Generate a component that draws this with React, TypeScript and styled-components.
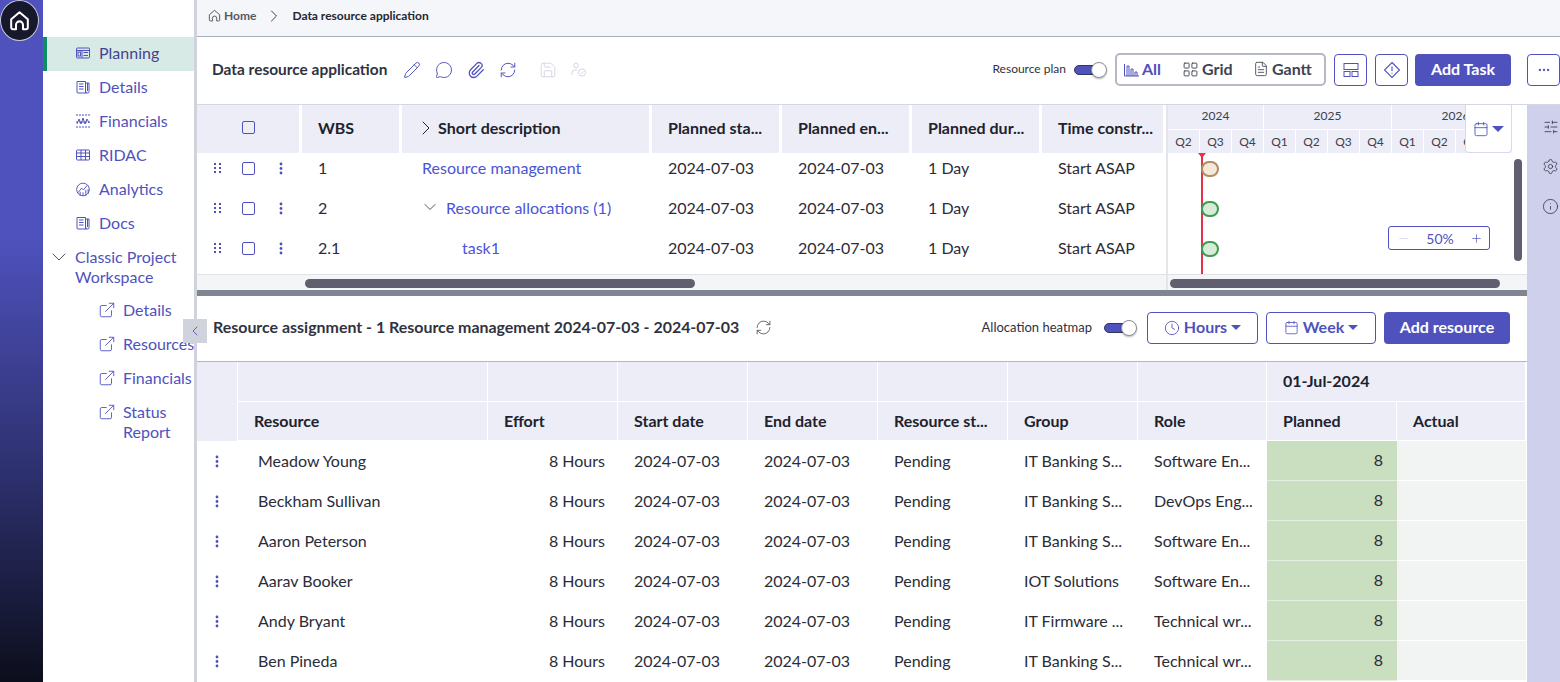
import React from 'react';
import styled, { createGlobalStyle } from 'styled-components';
import { Pencil, MessageCircle, Paperclip, RefreshCw, Save, ChevronRight, ChevronDown, ChevronLeft, ExternalLink, SlidersHorizontal, Settings, Info, LayoutGrid, FileText, Clock, Calendar, Plus, Minus, Ellipsis } from 'lucide-react';

const INDIGO = '#4f52bd';
const INK = '#2a2c38';

const Global = createGlobalStyle`
  html, body { margin: 0; padding: 0; height: 682px; overflow: hidden; background: #fff; }
  body { font-family: Lato, "Liberation Sans", sans-serif; color: ${INK}; }
  * { box-sizing: border-box; }
`;

const Page = styled.div`display: flex; width: 1560px; height: 682px; overflow: hidden;`;
const Rail = styled.div`
  width: 43px; flex: none;
  background: linear-gradient(180deg, ${INDIGO} 0, ${INDIGO} 235px, #2c2f6b 480px, #0c0e1c 682px);
`;
const HomeBadge = styled.div`
  width: 39px; height: 41px; border-radius: 50%; background: #17182b; border: 1px solid #c9cad6;
  display: flex; align-items: center; justify-content: center; color: #fff;
`;
const Side = styled.nav`
  width: 154px; flex: none; border-right: 3px solid #d0d3de; padding-top: 37px; position: relative;
`;
const NavItem = styled.div<{ $active?: boolean }>`
  height: 34px; display: flex; align-items: center; gap: 9px; padding-left: ${p => (p.$active ? '29px' : '33px')};
  padding-bottom: 2px;
  font-size: 16px; color: ${p => (p.$active ? '#414591' : INDIGO)};
  background: ${p => (p.$active ? '#d8eae5' : 'transparent')};
  border-left: ${p => (p.$active ? `4px solid #0b8f68` : 'none')};
`;
const NavLabel = styled.span`margin-top: -2px;`;
const NavIcon = styled.span`width: 14px; height: 14px; display: flex; flex: none; color: ${INDIGO};`;
const NavGroup = styled.div`
  display: flex; gap: 4px; padding: 6px 0 0 4px; font-size: 16px; line-height: 20px; color: ${INDIGO}; margin-bottom: 6px;
  & svg { margin-top: -2px; color: #555; flex: none; }
`;
const SubItem = styled.div`
  display: flex; gap: 7px; padding: 7px 0 7px 55px; font-size: 16px; line-height: 20px; color: ${INDIGO}; white-space: nowrap;
  & svg { margin-top: 1px; flex: none; }
`;
const Collapse = styled.div`
  position: absolute; left: 140px; top: 319px; width: 24px; height: 24px; background: #d0d3dc; z-index: 5;
  display: flex; align-items: center; justify-content: center; color: ${INDIGO};
`;
const Main = styled.div`flex: 1; min-width: 0; display: flex; flex-direction: column;`;
const Crumbs = styled.div`
  height: 37px; background: #f5f6f9; border-bottom: 1px solid #a9adbb; display: flex; align-items: center;
  padding: 0 0 5px 11px; font-size: 12px; font-weight: 700; color: #555964; flex: none;
`;
const CrumbHome = styled.span`display: flex; align-items: center; gap: 3px;`;
const CrumbSep = styled.span`display: flex; margin: 0 8px; color: #444;`;
const CrumbNow = styled.span`color: #24262f;`;
const Body = styled.div`flex: 1; display: flex; min-height: 0;`;
const Center = styled.div`width: 1330px; flex: none; display: flex; flex-direction: column;`;
const Tools = styled.div`
  height: 68px; flex: none; display: flex; align-items: center; padding: 0 0 2px 15px; border-bottom: 1px solid #d4d6e4;
`;
const Title = styled.div<{ $size: number }>`font-size: ${p => p.$size}px; font-weight: 700; color: #30333f; white-space: nowrap; padding-bottom: 2px;`;
const IconRow = styled.div`display: flex; align-items: center; gap: 14px; margin-left: 16px; color: ${INDIGO};`;
const Muted = styled.span<{ $push?: number }>`display: flex; color: #d5d6e6; margin-left: ${p => p.$push ?? 0}px;`;
const Spacer = styled.div`flex: 1;`;
const ToggleLabel = styled.span<{ $size: number }>`font-size: ${p => p.$size}px; color: #2f3140; white-space: nowrap; padding-bottom: 2px;`;
const ToggleWrap = styled.span<{ $gap: number }>`
  position: relative; display: block; width: 33px; height: 20px; margin-left: ${p => p.$gap}px; flex: none;
`;
const ToggleTrack = styled.span`
  position: absolute; left: 0; top: 5px; width: 28px; height: 10px; border-radius: 5px; background: ${INDIGO}; border: 1px solid #33365f;
`;
const ToggleKnob = styled.span`
  position: absolute; right: 0; top: 2px; width: 16px; height: 16px; border-radius: 50%; background: #fff; border: 1px solid #8b8d9c;
  box-shadow: 0 1px 2px rgba(0,0,0,.3);
`;
const Segment = styled.div`
  width: 211px; height: 33px; border: 2px solid #b5b8c6; border-radius: 5px; margin-left: 8px; display: flex; align-items: center; flex: none; padding-left: 7px;
`;
const SegItem = styled.span<{ $on?: boolean; $w: number }>`
  display: flex; align-items: center; gap: 3px; width: ${p => p.$w}px; font-size: 16px; line-height: 18px; padding-bottom: 1px; font-weight: 700; color: ${p => (p.$on ? INDIGO : '#3f4352')};
`;
const Square = styled.button<{ $gap?: number }>`
  width: 33px; height: 32px; margin-left: ${p => p.$gap ?? 8}px; border: 1px solid ${INDIGO}; border-radius: 4px; background: #fff; color: ${INDIGO};
  display: flex; align-items: center; justify-content: center; padding: 0; flex: none;
`;
const Primary = styled.button<{ $w: number; $right?: number; $left?: number }>`
  width: ${p => p.$w}px; height: 32px; margin-left: ${p => p.$left ?? 7}px; margin-right: ${p => p.$right ?? 0}px; border: none; border-radius: 4px; background: ${INDIGO}; color: #fff;
  font: 700 16px Lato, sans-serif; padding: 0 0 2px; flex: none;
`;
const Upper = styled.div`display: flex; height: 185px; flex: none;`;
const GridPane = styled.div`width: 969px; flex: none; display: flex; flex-direction: column;`;
const COLS1 = '105px 100px 250px 130px 130px 130px 124px';
const HeadRow1 = styled.div`display: grid; grid-template-columns: ${COLS1}; height: 48px; flex: none;`;
const HCell = styled.div<{ $pad?: number }>`
  background: #ecedf7; background-clip: padding-box; border-right: 3px solid #fff; display: flex; align-items: center;
  padding: 0 0 3px ${p => p.$pad ?? 16}px; font-size: 16px; font-weight: 700; color: #20222c; white-space: nowrap; overflow: hidden;
`;
const Clip = styled.div`height: 121px; overflow: hidden; flex: none;`;
const RowsUp = styled.div`margin-top: -6px;`;
const Row1 = styled.div`display: grid; grid-template-columns: ${COLS1}; height: 40px; align-items: center; font-size: 16px; color: ${INK};`;
const Handles = styled.div`display: flex; align-items: center; color: ${INDIGO}; padding-top: 2px;`;
const Grip = styled.span`display: flex; width: 45px; padding-left: 17px;`;
const Box = styled.span`display: block; width: 13px; height: 13px; border: 1.5px solid ${INDIGO}; border-radius: 2px; flex: none;`;
const Kebab = styled.span`display: flex; margin-left: 24px;`;
const Cell = styled.div<{ $pad?: number }>`padding-left: ${p => p.$pad ?? 16}px; display: flex; align-items: center; gap: 6px; white-space: nowrap;`;
const Linkish = styled.span`color: #4a55d6;`;
const BarTrack = styled.div`height: 16px; background: #f4f5f7; border-top: 1px solid #e2e3ea; flex: none; position: relative;`;
const Thumb = styled.div<{ $l: number; $w: number }>`
  position: absolute; left: ${p => p.$l}px; width: ${p => p.$w}px; top: 4px; height: 9px; border-radius: 5px; background: #5f5f70;
`;
const GanttPane = styled.div`
  width: 361px; flex: none; border-left: 2px solid #e4e5ea; display: flex; flex-direction: column; position: relative;
`;
const GanttHead = styled.div`width: 343px; overflow: hidden; height: 48px; flex: none;`;
const YearRow = styled.div`display: flex; width: 480px; height: 25px;`;
const Year = styled.div<{ $w: number }>`
  width: ${p => p.$w}px; flex: none; background: #ecedf7; border-right: 1px solid #fff; border-bottom: 1px solid #fff;
  text-align: center; font-size: 12px; line-height: 22px; color: #3d404c;
`;
const QuarterRow = styled.div`display: flex; width: 480px; height: 23px;`;
const Quarter = styled.div`
  width: 32px; flex: none; background: #ecedf7; border-right: 1px solid #fff; text-align: center; font-size: 12px; line-height: 23px; color: #3d404c;
`;
const GanttBody = styled.div`position: relative; height: 121px; flex: none; overflow: hidden;`;
const Marker = styled.div<{ $done?: boolean; $top: number }>`
  position: absolute; left: 33px; top: ${p => p.$top}px; width: 18px; height: 16px; border-radius: 8px;
  background: ${p => (p.$done ? '#f3e8da' : '#d6ecd6')}; border: 2px solid ${p => (p.$done ? '#b08d62' : '#3f9b52')};
`;
const Today = styled.div`position: absolute; left: 33px; top: 0; width: 2px; height: 121px; background: #e8304a;`;
const TodayCap = styled.div`
  position: absolute; left: 30px; top: 0; width: 0; height: 0; border-left: 4px solid transparent; border-right: 4px solid transparent; border-top: 5px solid #e8304a;
`;
const ZoomBox = styled.div`
  position: absolute; left: 220px; top: 73px; width: 102px; height: 24px; border: 1px solid ${INDIGO}; border-radius: 3px; background: #fff;
  display: flex; align-items: center; justify-content: space-between; padding: 0 6px 0 8px; font-size: 14px; color: ${INDIGO};
`;
const CalPick = styled.div`
  position: absolute; left: 297px; top: 0; width: 47px; height: 48px; background: #fff; border: 1px solid #d8d9f0; border-top: none; border-radius: 0 0 4px 4px;
  display: flex; align-items: center; justify-content: center; gap: 3px; color: ${INDIGO};
`;
const Caret = styled.span<{ $size?: number }>`
  display: block; width: 0; height: 0; border-left: ${p => p.$size ?? 6}px solid transparent; border-right: ${p => p.$size ?? 6}px solid transparent;
  border-top: ${p => p.$size ?? 6}px solid currentColor;
`;
const VScroll = styled.div`position: absolute; left: 346px; top: 54px; width: 8px; height: 102px; border-radius: 4px; background: #5f5f70;`;
const Split = styled.div`height: 6px; background: #7f8591; flex: none;`;
const Tools2 = styled(Tools)`height: 66px; padding: 0 0 2px 16px; border-bottom: 1px solid #b5b7c5;`;
const Outline = styled.button<{ $w: number; $left?: number }>`
  width: ${p => p.$w}px; height: 32px; margin-left: ${p => p.$left ?? 8}px; border: 1px solid ${INDIGO}; border-radius: 4px; background: #fff; color: ${INDIGO};
  display: flex; align-items: center; justify-content: center; gap: 4px; font: 700 16px Lato, sans-serif; padding: 0; flex: none;
`;
const OutlineText = styled.span`margin-top: -2px;`;
const COLS2 = '41px 250px 130px 130px 130px 130px 130px 129px 130px 129px';
const Head2 = styled.div`display: grid; grid-template-columns: ${COLS2}; grid-template-rows: 40px 39px; flex: none;`;
const H2 = styled.div<{ $span?: number }>`
  background: #ecedf7; background-clip: padding-box; border-right: 1px solid #fff; border-bottom: 1px solid #fff;
  display: flex; align-items: center; padding: 0 0 2px 16px; font-size: 16px; font-weight: 700; color: #20222c; white-space: nowrap;
  grid-column: span ${p => p.$span ?? 1};
`;
const H2Corner = styled(H2)`grid-row: span 2; border-bottom: none;`;
const Row2 = styled.div`display: grid; grid-template-columns: ${COLS2}; height: 40px; font-size: 16px; color: ${INK};`;
const C2 = styled.div<{ $right?: boolean; $pad?: number }>`
  display: flex; align-items: center; padding-left: ${p => p.$pad ?? 16}px; padding-bottom: 2px; white-space: nowrap;
  ${p => (p.$right ? 'justify-content: flex-end; padding-right: 13px;' : '')}
`;
const Planned = styled(C2)`background: #c9dfc0; justify-content: flex-end; padding-right: 14px; border-bottom: 1px solid #e4efdf;`;
const Actual = styled(C2)`background: #f2f3f3; border-bottom: 1px solid #fff;`;
const KebabCell = styled.div`display: flex; align-items: center; padding-left: 18px; color: ${INDIGO};`;
const RightRail = styled.aside`
  flex: 1; background: #cfd0ec; display: flex; flex-direction: column; align-items: flex-end; padding: 14px 1px 0 0; gap: 23px; color: #2f3140;
`;

const s = { strokeWidth: 1.3 };

const HomeGlyph = ({ size, weight }: { size: number; weight: number }) => (
  <svg width={size} height={size} viewBox="0 0 24 24" fill="none" stroke="currentColor" strokeWidth={weight} strokeLinejoin="round" strokeLinecap="round">
    <path d="M8 22H4.5A2 2 0 0 1 2.5 20V10.5L12 2.5l9.500 8V20a2 2 0 0 1-2 2H16v-5a4 4 0 0 0-8 0z" />
  </svg>
);
const DetailIcon = () => (
  <svg width="14" height="14" viewBox="0 0 14 14" fill="none" stroke="currentColor" strokeWidth="1">
    <path d="M1 1.500h8.500V12a1 1 0 0 0 1 1H2a1 1 0 0 1-1-1z" /><path d="M9.500 3H13v8.500a1.500 1.500 0 0 1-3 0" />
    <path d="M3 4h4.500M3 6.500h4.500M3 9h4.500" /><path d="M11.500 3v8" />
  </svg>
);
const PlanIcon = () => (
  <svg width="14" height="14" viewBox="0 0 14 14" fill="none" stroke="currentColor" strokeWidth="1">
    <rect x="0.5" y="2" width="13" height="10" rx="1" /><path d="M0.500 4.500h13M6 4.500V12" /><rect x="2" y="6" width="2.500" height="4" />
    <path d="M7.500 6.500H12M7.500 9.500H12" />
  </svg>
);
const FinIcon = () => (
  <svg width="14" height="14" viewBox="0 0 14 14" fill="none" stroke="currentColor" strokeWidth="1">
    <path d="M0 1h14M0 13h14" strokeDasharray="2 1" /><path d="M0 8h14" strokeDasharray="2 1" /><path d="M1 10l2-5 2 5 2-6 2 6 2-5 2 4" />
  </svg>
);
const TableIcon = () => (
  <svg width="14" height="14" viewBox="0 0 14 14" fill="none" stroke="currentColor" strokeWidth="1">
    <rect x="0.5" y="2" width="13" height="10" rx="1" /><path d="M0.500 5h13M0.500 8.500h13M5 2v10M9.500 2v10" />
  </svg>
);
const AnalyticsIcon = () => (
  <svg width="15" height="15" viewBox="0 0 15 15" fill="none" stroke="currentColor" strokeWidth="1">
    <circle cx="7.5" cy="7.5" r="6.8" /><path d="M2 11l4-5 2 2 4-5" /><path d="M4.500 14V10M7.500 14.300V10.500M10.500 14V8M13 12V7" />
  </svg>
);
const ChartIcon = () => (
  <svg width="15" height="15" viewBox="0 0 15 15" fill="none" stroke="currentColor" strokeWidth="1">
    <path d="M0.500 2v12H15" /><path d="M3 14V4h2v10M7 14V7h2v7M11 14V10h2v4" />
  </svg>
);
const GapIcon = () => (
  <svg width="16" height="16" viewBox="0 0 16 16" fill="none" stroke="currentColor" strokeWidth="1">
    <rect x="1" y="1.5" width="14" height="6" /><rect x="1" y="9.5" width="6" height="5" /><rect x="9" y="9.5" width="6" height="5" />
  </svg>
);
const DiamondIcon = () => (
  <svg width="18" height="18" viewBox="0 0 18 18" fill="none" stroke="currentColor" strokeWidth="1.1">
    <path d="M9 1.500L16.500 9 9 16.500 1.500 9z" /><path d="M9 5.500v4.500M9 11.800v1" />
  </svg>
);
const DragDots = () => (
  <svg width="7" height="11" viewBox="0 0 7 11" fill="currentColor">
    {[0, 4, 8].flatMap(y => [0, 5].map(x => <rect key={`${x}${y}`} x={x} y={y} width="2" height="2" />))}
  </svg>
);
const Dots = () => (
  <svg width="4" height="13" viewBox="0 0 4 13" fill="currentColor">
    <circle cx="2" cy="2" r="1.4" /><circle cx="2" cy="6.5" r="1.4" /><circle cx="2" cy="11" r="1.4" />
  </svg>
);
const UserCheckIcon = () => (
  <svg width="16" height="16" viewBox="0 0 16 16" fill="none" stroke="currentColor" strokeWidth="1">
    <circle cx="5" cy="3.5" r="2.3" /><path d="M1 13v-2.500A3 3 0 0 1 4 8h2" /><circle cx="11" cy="10.5" r="3.6" /><path d="M9.400 10.600l1.200 1.200 2-2.200" />
  </svg>
);

const nav = [
  { label: 'Planning', icon: <PlanIcon />, active: true },
  { label: 'Details', icon: <DetailIcon /> },
  { label: 'Financials', icon: <FinIcon /> },
  { label: 'RIDAC', icon: <TableIcon /> },
  { label: 'Analytics', icon: <AnalyticsIcon /> },
  { label: 'Docs', icon: <DetailIcon /> },
];
const sub = ['Details', 'Resources', 'Financials', 'Status\nReport'];
const tasks = [
  { wbs: '1', name: 'Resource management', pad: 20, chev: false, done: true },
  { wbs: '2', name: 'Resource allocations (1)', pad: 18, chev: true, done: false },
  { wbs: '2.1', name: 'task1', pad: 60, chev: false, done: false },
];
const years = [{ y: '2024', w: 96 }, { y: '2025', w: 128 }, { y: '2026', w: 128 }];
const quarters = ['Q2', 'Q3', 'Q4', 'Q1', 'Q2', 'Q3', 'Q4', 'Q1', 'Q2', 'Q3', 'Q4'];
const people = [
  ['Meadow Young', 'IT Banking S...', 'Software En...'],
  ['Beckham Sullivan', 'IT Banking S...', 'DevOps Eng...'],
  ['Aaron Peterson', 'IT Banking S...', 'Software En...'],
  ['Aarav Booker', 'IOT Solutions', 'Software En...'],
  ['Andy Bryant', 'IT Firmware ...', 'Technical wr...'],
  ['Ben Pineda', 'IT Banking S...', 'Technical wr...'],
];
const heads1 = ['Planned sta...', 'Planned en...', 'Planned dur...', 'Time constr...'];
const heads2 = ['Resource', 'Effort', 'Start date', 'End date', 'Resource st...', 'Group', 'Role', 'Planned', 'Actual'];

const Toggle = ({ gap }: { gap: number }) => (
  <ToggleWrap $gap={gap}><ToggleTrack /><ToggleKnob /></ToggleWrap>
);

export default function App() {
  return (
    <Page>
      <Global />
      <Rail>
        <HomeBadge><HomeGlyph size={21} weight={2.3} /></HomeBadge>
      </Rail>
      <Side>
        {nav.map(n => (
          <NavItem key={n.label} $active={n.active}>
            <NavIcon>{n.icon}</NavIcon><NavLabel>{n.label}</NavLabel>
          </NavItem>
        ))}
        <NavGroup>
          <ChevronDown size={24} strokeWidth={1} />
          <span>Classic Project<br />Workspace</span>
        </NavGroup>
        {sub.map(t => (
          <SubItem key={t}>
            <ExternalLink size={18} strokeWidth={1.2} />
            <span>{t.split('\n').map((l, i) => <React.Fragment key={l}>{i > 0 && <br />}{l}</React.Fragment>)}</span>
          </SubItem>
        ))}
        <Collapse><ChevronLeft size={16} strokeWidth={1.3} /></Collapse>
      </Side>
      <Main>
        <Crumbs>
          <CrumbHome><HomeGlyph size={13} weight={1.8} />Home</CrumbHome>
          <CrumbSep><ChevronRight size={20} strokeWidth={1.2} /></CrumbSep>
          <CrumbNow>Data resource application</CrumbNow>
        </Crumbs>
        <Tools>
          <Title $size={15.45}>Data resource application</Title>
          <IconRow>
            <Pencil size={18} {...s} />
            <MessageCircle size={18} {...s} />
            <Paperclip size={18} strokeWidth={1.7} />
            <RefreshCw size={18} {...s} />
            <Muted $push={8}><Save size={18} {...s} /></Muted>
            <Muted><UserCheckIcon /></Muted>
          </IconRow>
          <Spacer />
          <ToggleLabel $size={12}>Resource plan</ToggleLabel>
          <Toggle gap={8} />
          <Segment>
            <SegItem $on $w={58}><ChartIcon />All</SegItem>
            <SegItem $w={71}><LayoutGrid size={17} {...s} />Grid</SegItem>
            <SegItem $w={60}><FileText size={16} {...s} />Gantt</SegItem>
          </Segment>
          <Square><GapIcon /></Square>
          <Square><DiamondIcon /></Square>
          <Primary $w={96}>Add Task</Primary>
          <Square $gap={16}><Ellipsis size={14} /></Square>
        </Tools>
        <Body>
          <Center>
            <Upper>
              <GridPane>
                <HeadRow1>
                  <HCell $pad={45}><Box /></HCell>
                  <HCell>WBS</HCell>
                  <HCell $pad={12}><ChevronRight size={24} strokeWidth={1} />Short description</HCell>
                  {heads1.map(h => <HCell key={h}>{h}</HCell>)}
                </HeadRow1>
                <Clip>
                  <RowsUp>
                    {tasks.map(t => (
                      <Row1 key={t.wbs}>
                        <Handles>
                          <Grip><DragDots /></Grip>
                          <Box />
                          <Kebab><Dots /></Kebab>
                        </Handles>
                        <Cell>{t.wbs}</Cell>
                        <Cell $pad={t.pad}>
                          {t.chev && <ChevronDown size={20} strokeWidth={1.2} color="#555" />}
                          <Linkish>{t.name}</Linkish>
                        </Cell>
                        <Cell>2024-07-03</Cell>
                        <Cell>2024-07-03</Cell>
                        <Cell>1 Day</Cell>
                        <Cell>Start ASAP</Cell>
                      </Row1>
                    ))}
                  </RowsUp>
                </Clip>
                <BarTrack><Thumb $l={108} $w={390} /></BarTrack>
              </GridPane>
              <GanttPane>
                <GanttHead>
                  <YearRow>{years.map(y => <Year key={y.y} $w={y.w}>{y.y}</Year>)}</YearRow>
                  <QuarterRow>{quarters.map((q, i) => <Quarter key={i}>{q}</Quarter>)}</QuarterRow>
                </GanttHead>
                <GanttBody>
                  <Today /><TodayCap />
                  {tasks.map((t, i) => <Marker key={t.wbs} $done={t.done} $top={8 + i * 40} />)}
                  <ZoomBox>
                    <Minus size={13} strokeWidth={1.2} color="#c9cbe8" />
                    <span>50%</span>
                    <Plus size={13} strokeWidth={1.3} />
                  </ZoomBox>
                </GanttBody>
                <BarTrack><Thumb $l={2} $w={330} /></BarTrack>
                <CalPick><Calendar size={16} {...s} /><Caret /></CalPick>
                <VScroll />
              </GanttPane>
            </Upper>
            <Split />
            <Tools2>
              <Title $size={15.95}>Resource assignment - 1 Resource management 2024-07-03 - 2024-07-03</Title>
              <IconRow><RefreshCw size={17} strokeWidth={1.1} color="#444" /></IconRow>
              <Spacer />
              <ToggleLabel $size={13}>Allocation heatmap</ToggleLabel>
              <Toggle gap={12} />
              <Outline $w={111} $left={10}><Clock size={16} {...s} /><OutlineText>Hours</OutlineText><Caret $size={5} /></Outline>
              <Outline $w={110}><Calendar size={15} {...s} /><OutlineText>Week</OutlineText><Caret $size={5} /></Outline>
              <Primary $w={126} $left={8} $right={17}>Add resource</Primary>
            </Tools2>
            <Head2>
              <H2Corner />
              <H2 /><H2 /><H2 /><H2 /><H2 /><H2 /><H2 />
              <H2 $span={2}>01-Jul-2024</H2>
              {heads2.map(h => <H2 key={h}>{h}</H2>)}
            </Head2>
            {people.map(([name, group, role]) => (
              <Row2 key={name}>
                <KebabCell><Dots /></KebabCell>
                <C2 $pad={20}>{name}</C2>
                <C2 $right>8 Hours</C2>
                <C2>2024-07-03</C2>
                <C2>2024-07-03</C2>
                <C2>Pending</C2>
                <C2>{group}</C2>
                <C2>{role}</C2>
                <Planned>8</Planned>
                <Actual />
              </Row2>
            ))}
          </Center>
          <RightRail>
            <SlidersHorizontal size={16} strokeWidth={1.2} />
            <Settings size={17} strokeWidth={1.1} />
            <Info size={17} strokeWidth={1.1} />
          </RightRail>
        </Body>
      </Main>
    </Page>
  );
}
